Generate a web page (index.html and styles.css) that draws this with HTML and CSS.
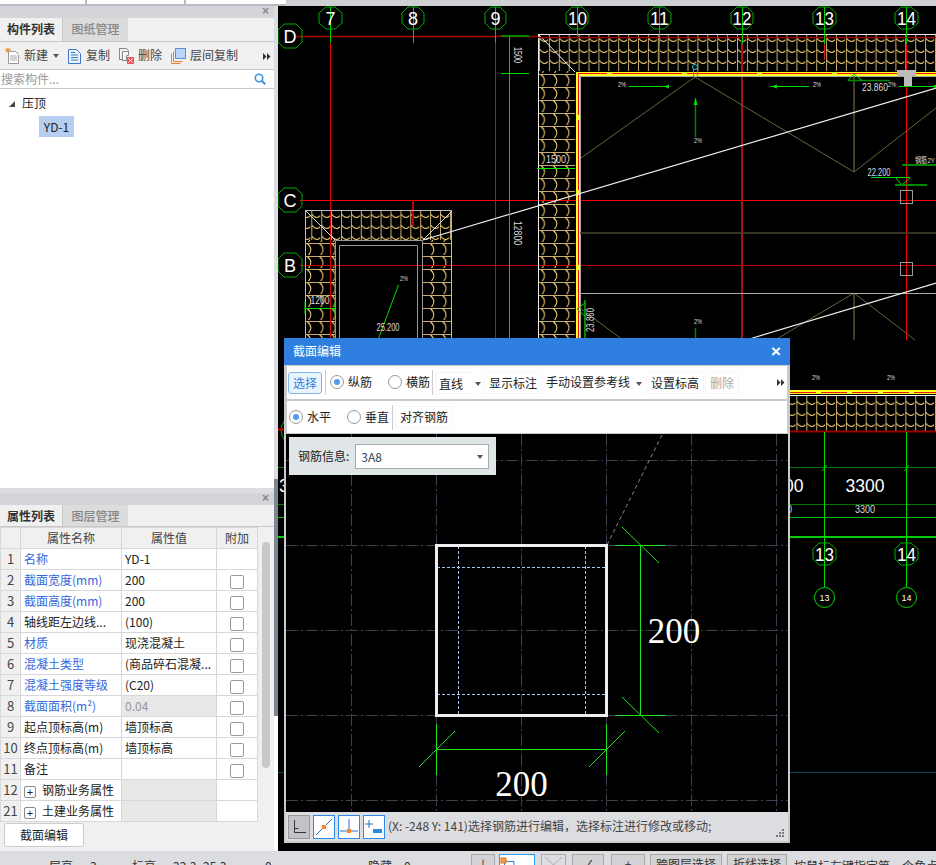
FILE: index.html
```html
<!DOCTYPE html>
<html lang="zh-CN">
<head>
<meta charset="utf-8">
<title>截面编辑</title>
<link rel="stylesheet" href="styles.css">
</head>
<body>
<div class="app">
  <div class="topstrip"><span class="ts ts1"></span><span class="ts ts2"></span><span class="ts ts3"></span><span class="ts ts4"></span></div>
  <div class="main">
    <aside class="side">
      <section class="panel panel-list">
        <div class="panel-head"><span class="panel-x">×</span></div>
        <div class="tabs"><span class="tab tab-on">构件列表</span><span class="tab tab-off">图纸管理</span></div>
        <div class="tools">
          <span class="tool tool-new">
            <svg class="ico" width="15" height="16" viewBox="0 0 15 16"><path d="M3.5 3.5h7l3 3v9h-10z" fill="#fff" stroke="#999"/><path d="M5 8h7M5 10h7M5 12h7" stroke="#aaa"/><path d="M0 2h6M3 0v5M1 .5l4 3.5M5 .5l-4 3.5" stroke="#f08a2a"/></svg>
            新建<i class="caret"></i></span>
          <span class="tool tool-copy">
            <svg class="ico" width="14" height="16" viewBox="0 0 14 16"><path d="M.5 1.5h8l4 4v10H.5z" fill="#eaf3fd" stroke="#3b78c8"/><path d="M3 7h7M3 9.5h7M3 12h7M3 4.500h4" stroke="#3b78c8"/></svg>
            复制</span>
          <span class="tool tool-del">
            <svg class="ico" width="15" height="16" viewBox="0 0 15 16"><path d="M.5.5h7l2 2v2" fill="none" stroke="#888"/><path d="M.5.5v11h4" fill="none" stroke="#888"/><path d="M3.500 3.500h6v4h-2v5h-4z" fill="#f4f4f4" stroke="#888"/><rect x="8" y="9" width="7" height="7" fill="#e55"/><path d="M9.500 10.500l4 4M13.500 10.500l-4 4" stroke="#fff"/></svg>
            删除</span>
          <span class="tool tool-floor">
            <svg class="ico" width="15" height="16" viewBox="0 0 15 16"><path d="M.5 5.500v10h9M2.500 3.500v10h9" fill="none" stroke="#ee7f2a"/><rect x="4.500" y=".5" width="10" height="10" fill="#b8d6fb" stroke="#5f8fcc"/></svg>
            层间复制</span>
          <svg class="more" width="8" height="7" viewBox="0 0 8 7"><path d="M0 0l3.500 3.500L0 7zM4 0l3.500 3.500L4 7z" fill="#333"/></svg>
        </div>
        <div class="search"><span class="search-text">搜索构件...</span>
          <svg class="search-ico" width="12" height="12" viewBox="0 0 12 12"><circle cx="5" cy="5" r="3.700" fill="none" stroke="#3f93d8" stroke-width="1.600"/><path d="M7.800 7.800l3.400 3.400" stroke="#3f93d8" stroke-width="2"/></svg>
        </div>
        <div class="tree">
          <div class="tree-root"><i class="tri"></i>压顶</div>
          <div class="tree-leaf"><span class="leaf-sel">YD-1</span></div>
        </div>
      </section>
      <section class="panel panel-prop">
        <div class="panel-head"><span class="panel-x">×</span></div>
        <div class="tabs"><span class="tab tab-on">属性列表</span><span class="tab tab-off">图层管理</span></div>
        <div class="table-wrap">
          <table class="prop">
            <colgroup><col class="c0"><col class="c1"><col class="c2"><col class="c3"></colgroup>
            <thead><tr><th></th><th>属性名称</th><th>属性值</th><th>附加</th></tr></thead>
            <tbody>
              <tr><td class="n">1</td><td class="b">名称</td><td>YD-1</td><td></td></tr>
              <tr><td class="n">2</td><td class="b">截面宽度(mm)</td><td>200</td><td class="k"><i class="cb"></i></td></tr>
              <tr><td class="n">3</td><td class="b">截面高度(mm)</td><td>200</td><td class="k"><i class="cb"></i></td></tr>
              <tr><td class="n">4</td><td>轴线距左边线...</td><td>(100)</td><td class="k"><i class="cb"></i></td></tr>
              <tr><td class="n">5</td><td class="b">材质</td><td>现浇混凝土</td><td class="k"><i class="cb"></i></td></tr>
              <tr><td class="n">6</td><td class="b">混凝土类型</td><td>(商品碎石混凝...</td><td class="k"><i class="cb"></i></td></tr>
              <tr><td class="n">7</td><td class="b">混凝土强度等级</td><td>(C20)</td><td class="k"><i class="cb"></i></td></tr>
              <tr><td class="n">8</td><td class="b">截面面积(m²)</td><td class="dis">0.04</td><td class="k"><i class="cb"></i></td></tr>
              <tr><td class="n">9</td><td>起点顶标高(m)</td><td>墙顶标高</td><td class="k"><i class="cb"></i></td></tr>
              <tr><td class="n">10</td><td>终点顶标高(m)</td><td>墙顶标高</td><td class="k"><i class="cb"></i></td></tr>
              <tr><td class="n">11</td><td>备注</td><td></td><td class="k"><i class="cb"></i></td></tr>
              <tr><td class="n">12</td><td><i class="plus">+</i>钢筋业务属性</td><td class="grp"></td><td></td></tr>
              <tr><td class="n">21</td><td><i class="plus">+</i>土建业务属性</td><td class="grp"></td><td></td></tr>
            </tbody>
          </table>
          <div class="scroll"></div>
        </div>
        <div class="prop-foot"><span class="foot-btn">截面编辑</span></div>
      </section>
    </aside>
    <div class="gutter"></div>
    <svg class="cad" width="658" height="845" viewBox="278 6 658 845" font-family="'Liberation Sans', sans-serif">
      <defs>
        <pattern id="tileH" width="9.900" height="11" patternUnits="userSpaceOnUse" x="538" y="36">
          <path d="M1.500 0V11" stroke="#c4ad6c" stroke-width="1"/>
          <path d="M1.500 2Q6.500 9 11.400 2" fill="none" stroke="#f2cc72" stroke-width="1"/>
        </pattern>
        <pattern id="tileV" width="12.300" height="13" patternUnits="userSpaceOnUse" x="538" y="73">
          <path d="M0 1.500H12.300" stroke="#c4ad6c" stroke-width="1"/>
          <path d="M3 1.500Q10 7.500 3 14.500" fill="none" stroke="#f2cc72" stroke-width="1"/>
        </pattern>
      </defs>
      <rect x="278" y="6" width="658" height="845" fill="#000"/>
      <!-- tile bands -->
      <rect x="539" y="35" width="397" height="36" fill="url(#tileH)"/>
      <rect x="539" y="71" width="36" height="271" fill="url(#tileV)"/>
      <rect x="306" y="211" width="146" height="29" fill="url(#tileH)"/>
      <rect x="306" y="240" width="29" height="100" fill="url(#tileV)"/>
      <rect x="423" y="240" width="29" height="100" fill="url(#tileV)"/>
      <rect x="790" y="396" width="146" height="35" fill="url(#tileH)"/>
      <!-- axis grid -->
      <g stroke-width="1" fill="none">
        <path d="M296 36.500H538" stroke="#a00" stroke-width="1.500"/>
        <path d="M300 200.500H936" stroke="#f00"/>
        <path d="M300 265.500H936" stroke="#c00"/>
        <path d="M330.500 36V340M495.500 36V340" stroke="#d00"/>
        <path d="M413 200V226" stroke="#b00" stroke-width="2"/>
        <path d="M742 40V340" stroke="#a11" stroke-width="2"/>
        <path d="M906.500 40V340" stroke="#f00"/>
        <path d="M659.500 36V60M824.500 40V60" stroke="#c22"/>
      </g>
      <g fill="none">
        <path d="M538.500 340V34.500H936" stroke="#eee"/>
        <path d="M538 34L575 72" stroke="#fff"/>
        <path d="M305.500 340V210.500H451.500V340" stroke="#bbb"/>
        <path d="M306 211L335 240M452 211L423 240" stroke="#ddd"/>
        <path d="M335.500 340V240.500H422.500V340M339.500 340V245.500H417.500V340" stroke="#999"/>
        <path d="M538 37.500H936" stroke="#900" stroke-width="1.500"/>
        <path d="M790 431.500H936" stroke="#900" stroke-width="2"/>
        <path d="M790 395.500H936" stroke="#fff"/>
        <path d="M578 340V74H936" stroke="#ffff20" stroke-width="4"/>
        <path d="M578.500 340V73.500H936" stroke="#e61414" stroke-width="1" stroke-dasharray="70 5"/>
        <path d="M580.500 340V76.500H936" stroke="#aaa" stroke-width="1"/>
        <path d="M790 392H936" stroke="#ffff20" stroke-width="4"/>
        <path d="M790 392.500H936" stroke="#e61414" stroke-dasharray="26 5"/>
        <path d="M285 420Q277 430 285 441" stroke="#0a0"/>
        <path d="M278 429.500H285" stroke="#c00" stroke-width="2"/>
      </g>
      <!-- roof lines -->
      <g fill="none" stroke="#66663a">
        <path d="M581 158L695 77L854 172L936 108"/>
        <path d="M854 76V172" stroke="#55552e" stroke-width="1.500"/>
        <path d="M580 233H936" stroke="#44442a" stroke-width="1.500"/>
        <path d="M854 293V340" stroke="#55552e" stroke-width="1.500"/>
        <path d="M775 340L854 293L915 340M580 308L623 340"/>
      </g>
      <path d="M580 293.500H936" stroke="#aaa" fill="none"/>
      <path d="M423 240L936 88M746 340L936 283" stroke="#eee" fill="none" stroke-width="1.200"/>
      <!-- dims -->
      <g stroke="#0d0" fill="none">
        <path d="M509.500 36V340" stroke="#0c0"/>
        <path d="M501 36H529" stroke="#080" stroke-width="2"/>
        <path d="M501 73.500H529"/>
        <path d="M537 168.500H575" stroke="#0e0"/>
        <path d="M305 308.500H335M305 302V314M335 302V314"/>
        <path d="M361 338.500H400"/>
        <path d="M398.500 285L378 340" />
        <path d="M363 339L369 345L375 339"/>
        <path d="M585 300V340" stroke="#080" stroke-width="2"/>
        <path d="M585 303L577 309L585 316"/>
        <path d="M629 86.500H666M770 86.500H809M899 86.500H936"/>
        <path d="M695.500 98V137M695.500 328V340" stroke="#080" stroke-width="1.500"/>
        <path d="M848 80.500H890" stroke="#080" stroke-width="1.500"/>
        <path d="M848 80.500L854 74L862 80.500"/>
        <path d="M871 177.500H910"/>
        <path d="M896 178L902 185L910 178"/>
        <path d="M895 185H927M902 165H936" stroke="#080" stroke-width="2"/>
      </g>
      <path d="M664 86.500l5-2v4zM771 86.500l6-2v4zM932 86.500l4-2v4z" fill="#0d0"/>
      <path d="M695.500 98l-2 7h4z" fill="#0d0"/>
      <circle cx="695" cy="67" r="2.500" fill="none" stroke="#2cc"/>
      <path d="M693.500 69V77M697.500 69V77" stroke="#2aa"/>
      <path d="M897 70H916V76H912V86H904V76H897z" fill="#bbb"/>
      <rect x="900.500" y="190.500" width="12" height="13" fill="none" stroke="#999"/>
      <rect x="900.500" y="262.500" width="12" height="13" fill="none" stroke="#999"/>
      <!-- lower dims -->
      <g fill="none">
        <path d="M278 467.500H936M278 504.500H936" stroke="#070"/>
        <path d="M278 517.500H936" stroke="#0b0"/>
        <path d="M278 537H936" stroke="#0c0" stroke-width="2"/>
        <path d="M824.500 432V587M906.500 432V587" stroke="#0d0"/>
        <path d="M822 471l5-6M904 471l5-6" stroke="#0c0"/>
        <circle cx="824.500" cy="597.500" r="10" stroke="#0d0"/>
        <circle cx="906.500" cy="597.500" r="10" stroke="#0d0"/>
        <path d="M278 772.500H936" stroke="#145"/>
      </g>
      <!-- axis bubbles -->
      <g fill="none" stroke="#0a0">
        <path d="M330.500 7V43M413.500 7V43M495.500 7V43M577.500 7V36M659.500 7V44M742.500 7V44M824.500 7V44M906.500 7V44" stroke="#0c0"/>
        <path d="M326 7H335L342 13V23L335 29H326L319 23V13Z"/>
        <path d="M408 7H418L424 13V23L418 29H408L402 23V13Z"/>
        <path d="M491 7H500L506 13V23L500 29H491L485 23V13Z"/>
        <path d="M572 7H582L588 13V23L582 29H572L566 23V13Z"/>
        <path d="M654 7H664L671 13V23L664 29H654L648 23V13Z"/>
        <path d="M737 7H747L753 13V23L747 29H737L731 23V13Z"/>
        <path d="M819 7H829L836 13V23L829 29H819L813 23V13Z"/>
        <path d="M901 7H911L918 13V23L911 29H901L895 23V13Z"/>
        <path d="M284 24H296L302 30V42L296 48H284L278 42V30Z"/>
        <path d="M284 188H296L302 194V206L296 212H284L278 206V194Z"/>
        <path d="M284 253H296L302 259V271L296 277H284L278 271V259Z"/>
        <path d="M819 543H829L836 549V559L829 565H819L813 559V549Z"/>
        <path d="M901 543H911L918 549V559L911 565H901L895 559V549Z"/>
      </g>
      <g fill="#fff" font-size="18" text-anchor="middle" font-family="'Liberation Sans Narrow', 'Liberation Sans', sans-serif">
        <text x="330.500" y="25">7</text><text x="413" y="25">8</text><text x="495.500" y="25">9</text>
        <text x="577.500" y="25" textLength="19" lengthAdjust="spacingAndGlyphs">10</text><text x="659.500" y="25" textLength="19" lengthAdjust="spacingAndGlyphs">11</text><text x="742" y="25" textLength="19" lengthAdjust="spacingAndGlyphs">12</text><text x="824.500" y="25" textLength="19" lengthAdjust="spacingAndGlyphs">13</text><text x="906.500" y="25" textLength="19" lengthAdjust="spacingAndGlyphs">14</text>
        <text x="290" y="43">D</text><text x="290" y="207">C</text><text x="290" y="272">B</text>
        <text x="824.500" y="561" textLength="19" lengthAdjust="spacingAndGlyphs">13</text><text x="906.500" y="561" textLength="19" lengthAdjust="spacingAndGlyphs">14</text>
        <text x="865" y="492" textLength="39" lengthAdjust="spacingAndGlyphs">3300</text><text x="784" y="492" textLength="39" lengthAdjust="spacingAndGlyphs">3300</text><text x="279" y="492" text-anchor="start">3</text>
      </g>
      <g fill="#ddd" font-size="10" text-anchor="middle" font-family="'Liberation Sans Narrow', 'Liberation Sans', sans-serif">
        <text x="556" y="163" textLength="20" lengthAdjust="spacingAndGlyphs">1500</text>
        <text x="320" y="304" textLength="19" lengthAdjust="spacingAndGlyphs">1200</text>
        <text x="388" y="331" textLength="23" lengthAdjust="spacingAndGlyphs">25.200</text>
        <text x="865" y="513" textLength="20" lengthAdjust="spacingAndGlyphs">3300</text>
        <text x="782" y="513" textLength="20" lengthAdjust="spacingAndGlyphs">3300</text>
        <text x="875" y="91" font-size="11" textLength="26" lengthAdjust="spacingAndGlyphs">23.860</text>
        <text x="879" y="176" font-size="10" textLength="23" lengthAdjust="spacingAndGlyphs">22.200</text>
        <text x="925" y="163" font-size="8" textLength="20" lengthAdjust="spacingAndGlyphs">钢筋2Y</text>
        <text x="622" y="87" font-size="8" textLength="8" lengthAdjust="spacingAndGlyphs">2%</text><text x="817" y="87" font-size="8" textLength="8" lengthAdjust="spacingAndGlyphs">2%</text><text x="892" y="87" font-size="8" textLength="8" lengthAdjust="spacingAndGlyphs">2%</text>
        <text x="698" y="143" font-size="8" textLength="8" lengthAdjust="spacingAndGlyphs">2%</text><text x="698" y="324" font-size="8" textLength="8" lengthAdjust="spacingAndGlyphs">2%</text><text x="404" y="281" font-size="8" textLength="8" lengthAdjust="spacingAndGlyphs">2%</text>
        <text x="816" y="380" font-size="8" textLength="8" lengthAdjust="spacingAndGlyphs">2%</text><text x="891" y="380" font-size="8" textLength="8" lengthAdjust="spacingAndGlyphs">2%</text>
        <text transform="translate(514 55) rotate(90)" textLength="16" lengthAdjust="spacingAndGlyphs">1500</text>
        <text transform="translate(514 233) rotate(90)" textLength="24" lengthAdjust="spacingAndGlyphs">12800</text>
        <text transform="translate(594 320) rotate(-90)" textLength="24" lengthAdjust="spacingAndGlyphs">23.860</text>
      </g>
      <g fill="#fff" font-size="9" text-anchor="middle" font-family="'Liberation Sans Narrow', 'Liberation Sans', sans-serif">
        <text x="824.500" y="601">13</text><text x="906.500" y="601">14</text>
      </g>
    </svg>
  </div>
  <div class="status">
    <span class="st st1">层高</span><span class="st st2">3</span><span class="st st3">标高</span><span class="st st4">22.3~25.3</span><span class="st st5">0</span><span class="st st6">隐藏</span><span class="st st7">0</span>
    <span class="sb sb1">⊥</span>
    <span class="sb sb2"><svg width="20" height="12" viewBox="0 0 20 12"><path d="M4.500 4.500H14V12M4.500 4.500V12" fill="none" stroke="#3a7bd5"/><rect x="1" y="1" width="5" height="5" fill="#f49a4a" stroke="#e57a1a"/></svg></span>
    <span class="sb sb3"><svg width="23" height="12" viewBox="0 0 23 12"><path d="M3 0L11.500 8L20 0M11.500 8L3 16M11.500 8L20 16" fill="none" stroke="#aaa"/></svg></span><span class="sb sb4">✓</span><span class="sb sb5">+</span>
    <span class="sb sb6">跨图层选择</span><span class="sb sb7">折线选择</span>
    <span class="st st8">按鼠标左键指定第一个角点</span>
  </div>
</div>

<div class="dialog">
  <div class="dlg-title"><span>截面编辑</span><span class="dlg-x">×</span></div>
  <div class="dlg-row dlg-r1">
    <span class="btn-sel">选择</span><i class="vr"></i>
    <label class="radio r-a"><i class="dot on"></i>纵筋</label>
    <label class="radio r-b"><i class="dot"></i>横筋</label><i class="vr"></i>
    <span class="combo">直线<i class="caret"></i></span>
    <span class="lbtn show">显示标注</span>
    <span class="plain">手动设置参考线<i class="caret"></i></span>
    <span class="lbtn">设置标高</span>
    <span class="lbtn off">删除</span>
    <svg class="more dlg-more" width="8" height="7" viewBox="0 0 8 7"><path d="M0 0l3.500 3.500L0 7zM4 0l3.500 3.500L4 7z" fill="#333"/></svg>
  </div>
  <div class="dlg-row dlg-r2">
    <label class="radio r-c"><i class="dot on"></i>水平</label>
    <label class="radio r-d"><i class="dot"></i>垂直</label><i class="vr"></i>
    <span class="lbtn align">对齐钢筋</span>
  </div>
  <div class="dlg-canvas">
    <svg class="sec" width="502" height="378" viewBox="286 434 502 378">
      <rect x="286" y="434" width="502" height="378" fill="#000"/>
      <path d="M351.500 434V812M436.500 434V812M521.500 434V812M606.500 434V812M691.500 434V812M776.500 434V812M286 460.500H788M286 545.500H788M286 630.500H788M286 715.500H788M286 800.500H788" stroke="#39404f" stroke-dasharray="12 3 2 3" fill="none"/>
      <path d="M607 545L662 435" stroke="#888" stroke-dasharray="4 3" fill="none"/>
      <path d="M458.500 546V715M585.500 546V715M437 567.500H606M437 694.500H606" stroke="#a8c8f0" stroke-dasharray="3 2" fill="none"/>
      <rect x="436.500" y="545.500" width="170" height="170" fill="none" stroke="#eee" stroke-width="3"/>
      <path d="M640.500 545V716M615 545.500H666M615 715.500H666M622 527L659 563M622 697L659 733M436.500 749.500H606.500M436.500 724V775M606.500 724V775M419 767L455 731M589 767L625 731" stroke="#1fe01f" fill="none"/>
      <text class="dim" x="674" y="643">200</text>
      <text class="dim" x="521.500" y="796">200</text>
    </svg>
    <div class="info"><span>钢筋信息:</span><span class="select">3A8<i class="caret"></i></span></div>
  </div>
  <div class="dlg-foot">
    <span class="ft ft0"><svg width="18" height="18" viewBox="0 0 18 18"><path d="M4.500 2V14.500H16M4.500 10.500h4" fill="none" stroke="#333"/></svg></span>
    <span class="ft ft1"><svg width="18" height="18" viewBox="0 0 18 18"><path d="M1 17L17 1" stroke="#2a6fc4"/><rect x="7" y="7" width="4" height="4" fill="#f08a2a"/></svg></span>
    <span class="ft ft1"><svg width="18" height="18" viewBox="0 0 18 18"><path d="M9 1V13M0 13H18" stroke="#2a6fc4"/><rect x="7" y="11" width="4" height="4" fill="#f08a2a"/></svg></span>
    <span class="ft ft1"><svg width="18" height="18" viewBox="0 0 18 18"><path d="M0 6H8M4 2V10" stroke="#2a6fc4"/><rect x="8" y="11" width="9" height="4" fill="#2f8be0"/></svg></span>
    <span class="foot-msg">(X: -248 Y: 141)选择钢筋进行编辑，选择标注进行修改或移动;</span>
    <svg class="grip" width="9" height="9" viewBox="0 0 9 9"><path d="M6 0h2v2H6zM3 3h2v2H3zM6 3h2v2H6zM0 6h2v2H0zM3 6h2v2H3zM6 6h2v2H6z" fill="#777"/></svg>
  </div>
</div>
</body>
</html>
```
FILE: styles.css
```css
* { box-sizing: border-box; }
html, body { margin: 0; padding: 0; height: 865px; overflow: hidden; }
body { font: 12px/1.2 "Noto Sans CJK SC", "Noto Sans", sans-serif; color: #222; background: #dcdde1; position: relative; }
i { font-style: normal; }

.app { width: 936px; height: 865px; display: flex; flex-direction: column; }
.topstrip { height: 6px; flex: none; display: flex; background: #fff; box-shadow: inset 0 -2px #b8babe; }
.ts { height: 4px; border-right: 2px solid #bbb; }
.ts1 { width: 87px; } .ts2 { width: 99px; } .ts3 { width: 100px; border: 0; }
.ts4 { flex: 1; height: 6px; border: 0; background: #cdcfd3; }
.main { flex: none; height: 845px; display: flex; }
.side { width: 274px; flex: none; display: flex; flex-direction: column; gap: 5px; background: #dcdde1; }
.gutter { width: 4px; flex: none; background: linear-gradient(#dcdde1 0 56%, #7e8690 56% 84%, #fff 84%); }
.cad { display: block; flex: none; }

.panel { display: flex; flex-direction: column; background: #f0f0f0; }
.panel-list { height: 482px; }
.panel-prop { height: 358px; }
.panel-head { height: 12px; flex: none; background: #d4d5da; display: flex; justify-content: flex-end; }
.panel-x { width: 12px; font: bold 12px/11px "Liberation Sans", sans-serif; color: #888; text-align: left; }
.tabs { height: 24px; flex: none; display: flex; background: #f0f0f0; border-bottom: 1px solid #c8c8c8; }
.panel-prop .tabs { height: 22px; }
.tab { text-align: center; line-height: 21px; font-size: 12px; }
.tab-on { width: 63px; font-weight: 700; color: #333; border-right: 1px solid #c8c8c8; }
.tab-off { width: 65px; color: #888; background: #dcdcdc; font-weight: 500; }

.tools { height: 28px; flex: none; display: flex; align-items: center; border-bottom: 1px solid #c8c8c8; padding-left: 5px; color: #444; position: relative; }
.tool { display: inline-flex; align-items: center; gap: 4px; }
.tool-copy, .tool-del, .tool-floor { margin-left: 9px; }
.caret { display: inline-block; width: 0; height: 0; border: 3px solid transparent; border-top: 4px solid #555; border-bottom: 0; margin-left: 4px; vertical-align: middle; }
.tool-new .caret { margin-left: 1px; }
.more { display: block; }
.tools .more { position: absolute; left: 263px; top: 11px; }

.search { height: 19px; flex: none; background: #fff; border-bottom: 1px solid #c8c8c8; display: flex; align-items: center; justify-content: space-between; padding: 0 8px 0 1px; color: #999; }
.tree { flex: 1; background: #fff; padding-top: 3px; }
.tree-root { height: 22px; line-height: 22px; padding-left: 22px; position: relative; color: #222; }
.tri { position: absolute; left: 9px; top: 9px; width: 0; height: 0; border-style: solid; border-width: 0 0 6px 6px; border-color: transparent transparent #444 transparent; }
.tree-leaf { padding-left: 39px; margin-top: 2px; }
.leaf-sel { display: inline-block; width: 35px; height: 21px; line-height: 21px; background: #b6cff0; text-align: center; color: #222; }

.table-wrap { flex: 1; position: relative; background: #f0f0f0; overflow: hidden; }
.prop { border-collapse: collapse; table-layout: fixed; width: 257px; background: #fff; }
.c0 { width: 20px; } .c1 { width: 101px; } .c2 { width: 95px; } .c3 { width: 41px; }
.prop th, .prop td { height: 21px; padding: 0 3px; border: 1px solid #d8d8d8; white-space: nowrap; overflow: hidden; font-weight: 400; line-height: 18px; color: #222; }
.prop th { background: #f0f0f0; text-align: center; color: #444; }
.prop td.n { background: #f0f0f0; text-align: center; color: #444; padding: 0; font-size: 13px; }
.prop td.b { color: #3667dd; }
.prop td.dis { background: #e8e8e8; color: #999; }
.prop td.grp { background: #e8e8e8; }
.prop td.k { text-align: center; padding: 0; }
.cb { display: inline-block; width: 14px; height: 14px; border: 1px solid #999; border-radius: 2px; background: #fff; vertical-align: middle; }
.plus { display: inline-block; width: 12px; height: 12px; margin-right: 6px; border: 1px solid #888; border-radius: 2px; font: 11px/10px "Liberation Sans", sans-serif; text-align: center; vertical-align: -1px; }
.scroll { position: absolute; left: 262px; top: 15px; width: 8px; height: 226px; background: #c8c8c8; border-radius: 4px; }
.prop-foot { height: 29px; flex: none; padding: 1px 0 0 4px; background: #f0f0f0; }
.foot-btn { display: block; width: 80px; height: 24px; line-height: 22px; text-align: center; background: #fff; border: 1px solid #ccc; border-radius: 3px; }

.status { height: 14px; flex: none; position: relative; background: #dcdde1; overflow: hidden; color: #333; }
.st { position: absolute; top: 8px; white-space: nowrap; }
.st1 { left: 49px; } .st2 { left: 90px; } .st3 { left: 132px; } .st4 { left: 173px; } .st5 { left: 265px; } .st6 { left: 368px; } .st7 { left: 404px; } .st8 { left: 794px; }
.sb { position: absolute; top: 3px; height: 20px; border: 1px solid #aaa; background: #d2d2d4; text-align: center; line-height: 17px; }
.sb1 { left: 471px; width: 24px; } .sb2 { left: 499px; width: 36px; background: #fff; border: 1px solid #2e9bf0; text-align: left; }
.sb3 { left: 541px; width: 25px; background: #dcdde1; } .sb4 { left: 572px; width: 32px; } .sb5 { left: 611px; width: 34px; }
.sb6 { left: 650px; width: 72px; } .sb7 { left: 727px; width: 60px; }

.dialog { position: absolute; left: 284px; top: 338px; width: 506px; height: 505px; background: #c8cace; display: flex; flex-direction: column; padding: 0 2px 2px; }
.dlg-title { height: 27px; flex: none; margin: 0 -2px; background: #2e7fe0; color: #fff; display: flex; align-items: center; justify-content: space-between; padding: 0 9px 0 9px; }
.dlg-x { font: bold 17px/1 "Liberation Sans", sans-serif; }
.dlg-row { height: 33px; flex: none; background: #fff; margin: 1px 1px 0; display: flex; align-items: center; position: relative; }
.dlg-r1 { padding-left: 1px; }
.dlg-r2 { margin-top: 2px; height: 32px; padding-left: 2px; }
.btn-sel { width: 34px; height: 22px; line-height: 20px; text-align: center; color: #2e7fe0; background: #eaf4ff; border: 1px solid #7db8ee; border-radius: 3px; }
.vr { width: 1px; height: 25px; background: #ccc; flex: none; margin: 0 3px; }
.radio { display: inline-flex; align-items: center; gap: 4px; white-space: nowrap; }
.dot { width: 14px; height: 14px; border: 1px solid #999; border-radius: 50%; background: #fff; display: inline-block; flex: none; position: relative; }
.dot.on::after { content: ""; position: absolute; left: 3px; top: 3px; width: 6px; height: 6px; border-radius: 50%; background: #4d9cf2; }
.r-a { margin-left: 1px; width: 58px; } .r-b { width: 42px; margin-right: -1px; }
.r-c { width: 58px; } .r-d { width: 42px; }
.combo { width: 37px; height: 22px; line-height: 21px; padding-left: 2px; border: 1px solid #f4f4f4; border-right: 0; border-radius: 3px 0 0 3px; position: relative; white-space: nowrap; }
.combo .caret { position: absolute; left: 38px; top: 9px; margin: 0; }
.lbtn { height: 22px; line-height: 20px; padding: 0 4px; border: 1px solid #f6f6f6; border-radius: 3px; white-space: nowrap; }
.lbtn.off { color: #aaa; margin-left: 1px; }
.lbtn.show { margin-left: 11px; }
.lbtn.align { margin-left: -1px; }
.plain { margin-left: 4px; width: 100px; white-space: nowrap; }
.plain .caret { margin-left: 6px; }
.dlg-more { position: absolute; left: 490px; top: 13px; }

.dlg-canvas { flex: none; height: 378px; position: relative; overflow: hidden; margin-top: 1px; }
.sec { display: block; }
.dim { font: 35px "Liberation Serif", serif; fill: #fff; text-anchor: middle; }
.info { position: absolute; left: 3px; top: 3px; width: 207px; height: 38px; background: #e0e6e8; display: flex; align-items: center; gap: 6px; padding-left: 9px; }
.select { width: 134px; height: 25px; line-height: 23px; padding-left: 5px; border: 1px solid #aaa; background: #fff; color: #345; position: relative; }
.select .caret { position: absolute; right: 5px; top: 10px; }

.dlg-foot { flex: 1; background: #dcdde1; display: flex; align-items: center; position: relative; padding-left: 2px; gap: 3px; color: #333; }
.ft { width: 22px; height: 24px; flex: none; display: flex; align-items: center; justify-content: center; }
.ft0 { background: #c2c3c6; border: 1px solid #999; }
.ft1 { background: #fff; border: 1px solid #2e8bec; }
.foot-msg { white-space: nowrap; color: #444; }
.grip { position: absolute; right: 3px; bottom: 3px; }
```
